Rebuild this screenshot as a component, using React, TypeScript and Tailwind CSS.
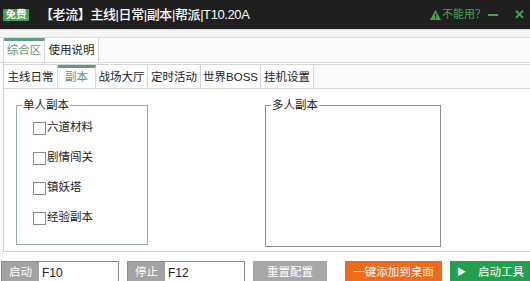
const FONT = "font-['Liberation_Sans','Noto_Sans_CJK_SC',sans-serif]"

const topTabs = [
  { label: "综合区", width: "w-[41px]", active: true },
  { label: "使用说明", width: "w-[54px]", active: false },
]

const subTabs = [
  { label: "主线日常", width: "w-[54px]", active: false },
  { label: "副本", width: "w-[38px]", active: true },
  { label: "战场大厅", width: "w-[52px]", active: false },
  { label: "定时活动", width: "w-[53px]", active: false },
  { label: "世界BOSS", width: "w-[60px]", active: false },
  { label: "挂机设置", width: "w-[53px]", active: false },
]

const singleDungeons = ["六道材料", "剧情闯关", "镇妖塔", "经验副本"]

function Tab({ label, width, active }: { label: string; width: string; active: boolean }) {
  return (
    <div
      className={
        "flex h-full shrink-0 items-center justify-center border-r border-[#d6d6d6] text-[11.5px] " +
        width +
        (active
          ? " border-t-[3px] border-t-[#5f9c82] bg-white pb-[1px] text-[#5e957c]"
          : " bg-white pt-[2px] text-[#222]")
      }
    >
      {label}
    </div>
  )
}

function GroupBox({ title, className, children }: { title: string; className: string; children?: React.ReactNode }) {
  return (
    <div className={"relative border border-[#93ada7] " + className}>
      <span className="absolute left-[5px] top-[-9px] bg-white px-[1px] text-[11.5px] leading-[16px] text-[#222]">
        {title}
      </span>
      {children}
    </div>
  )
}

function KeyField({ label, value }: { label: string; value: string }) {
  return (
    <div className="flex h-[24px] items-stretch border border-[#8c8c8c]">
      <div className="flex w-[37px] items-center justify-center bg-[#a3a3a3] text-[11.5px] text-white">{label}</div>
      <div className="flex w-[79px] items-center bg-white pl-[3px] text-[12px] text-[#222]">{value}</div>
    </div>
  )
}

export default function App() {
  return (
    <div className={"flex h-[281px] w-[530px] flex-col overflow-hidden bg-white " + FONT}>
      <div className="flex h-[29px] shrink-0 items-center bg-[#1f1f1f] pl-[3px] pr-[5px]">
        <div className="flex h-[12px] w-[26px] items-center justify-center rounded-[1px] bg-[#3aa849] text-[10.5px] font-bold leading-none text-white">
          免费
        </div>
        <div className="ml-[11px] text-[13px] font-medium tracking-[-0.4px] text-white">
          【老流】主线|日常|副本|帮派|T10.20A
        </div>
        <div className="ml-auto flex items-center text-[#45a352]">
          <svg width="11" height="10" viewBox="0 0 11 10" className="mr-[1px]">
            <path d="M5.5 0 L11 10 L0 10 Z" fill="#45a352" />
            <rect x="5" y="3.5" width="1.2" height="3.6" fill="#1f1f1f" />
            <rect x="5" y="7.8" width="1.2" height="1.2" fill="#1f1f1f" />
          </svg>
          <span className="text-[11px]">不能用？</span>
          <span className="ml-[2px] h-[2px] w-[10px] bg-[#45a352]" />
          <span className="ml-[16px] text-[13px] font-bold leading-none">✕</span>
        </div>
      </div>

      <div className="h-[8px] shrink-0 border-t border-[#d9d9d9] bg-[#f4f4f4]" />

      <div className="flex h-[26px] shrink-0 border-y border-[#dcdcdc] bg-[#fbfbfb] pl-[3px]">
        <div className="flex h-full border-l border-[#d6d6d6]">
          {topTabs.map((t) => (
            <Tab key={t.label} {...t} />
          ))}
        </div>
      </div>

      <div className="flex min-h-0 flex-1 flex-col pl-[3px]">
        <div className="flex min-h-0 flex-1 flex-col border-b border-l border-[#d0d0d0]">
          <div className="mt-[1px] flex h-[25px] shrink-0 border-y border-[#d6d6d6] bg-[#fbfbfb]">
            {subTabs.map((t) => (
              <Tab key={t.label} {...t} />
            ))}
          </div>

          <div className="flex flex-1 items-start pl-[12px] pt-[16px]">
            <GroupBox title="单人副本" className="h-[140px] w-[132px]">
              <div className="flex flex-col gap-[16px] pl-[16px] pt-[15px]">
                {singleDungeons.map((name) => (
                  <label key={name} className="flex h-[14px] items-center text-[11.5px] text-[#222]">
                    <span className="mr-[1px] h-[13px] w-[13px] border border-[#8a8a8a] bg-white" />
                    {name}
                  </label>
                ))}
              </div>
            </GroupBox>
            <GroupBox title="多人副本" className="ml-[117px] h-[142px] w-[176px] border-[#83918e]" />
          </div>
        </div>

        <div className="flex max-h-[29px] flex-1 shrink-0 items-end gap-[8px]">
          <div className="mb-[-4px] ml-[-2px] flex items-center gap-[8px]">
            <KeyField label="启动" value="F10" />
            <KeyField label="停止" value="F12" />
          </div>
          <button className="mb-[-4px] h-[24px] w-[74px] bg-[#a8a8a8] text-[11.5px] text-white">重置配置</button>
          <button className="mb-[-4px] ml-[10px] h-[24px] w-[97px] bg-[#f06a1c] text-[11.5px] text-white">
            一键添加到桌面
          </button>
          <button className="mb-[-4px] flex h-[24px] w-[80px] items-center bg-[#23a04f] pl-[7px] text-[11.5px] text-white">
            <span className="text-[9px]">▶</span>
            <span className="ml-[12px]">启动工具</span>
          </button>
        </div>
      </div>
    </div>
  )
}
